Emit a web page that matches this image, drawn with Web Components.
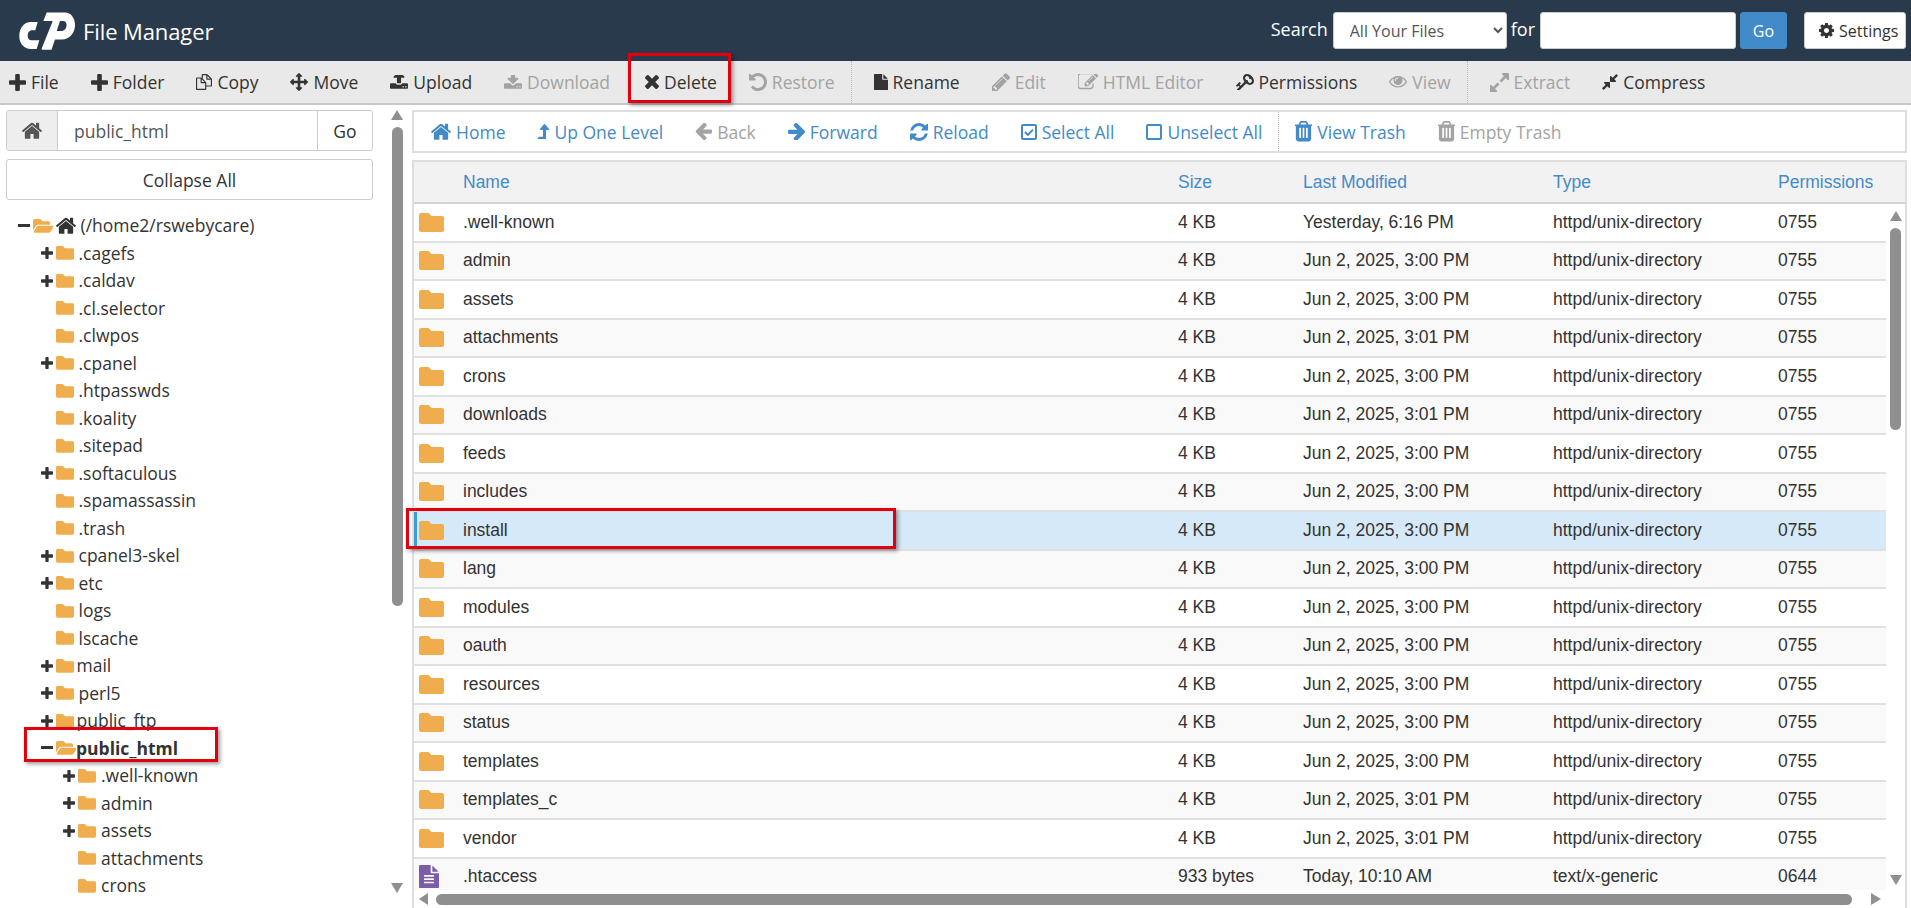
<!DOCTYPE html>
<html lang="en">
<head>
<meta charset="utf-8">
<title>File Manager</title>
<style>
html, body { margin: 0; padding: 0; background: #fff; overflow: hidden; }
body { width: 1911px; height: 908px; font-family: "Open Sans", "Liberation Sans", sans-serif; color: #333; }
</style>
</head>
<body>
<fm-page>
    <fm-header></fm-header>

    <fm-toolbar>
        <fm-action icon="plus" w="17" label="File" style="--pad-l:9px"></fm-action>
        <fm-action icon="plus" w="17" label="Folder"></fm-action>
        <fm-action icon="copy" w="16" label="Copy"></fm-action>
        <fm-action icon="move" w="18" label="Move"></fm-action>
        <fm-action icon="upload" w="18" label="Upload"></fm-action>
        <fm-action icon="download" w="18" label="Download" disabled></fm-action>
        <fm-action icon="times" w="14" label="Delete" style="--pad-l:19px"></fm-action>
        <fm-action icon="undo" w="18" label="Restore" disabled></fm-action>
        <fm-sep style="--after:6px"></fm-sep>
        <fm-action icon="file" w="14" label="Rename"></fm-action>
        <fm-action icon="pencil" w="18" label="Edit" disabled></fm-action>
        <fm-action icon="edit" w="20" label="HTML Editor" disabled></fm-action>
        <fm-action icon="key" w="18" label="Permissions"></fm-action>
        <fm-action icon="eye" w="18" label="View" disabled></fm-action>
        <fm-sep style="--after:6px"></fm-sep>
        <fm-action icon="expand" w="19" label="Extract" disabled></fm-action>
        <fm-action icon="compress" w="16" label="Compress"></fm-action>
    </fm-toolbar>

    <fm-workspace>
        <fm-sidebar slot="left">
            <fm-tree-row toggle="minus" open root>(/home2/rswebycare)</fm-tree-row>
            <fm-tree-row level="1" toggle="plus">.cagefs</fm-tree-row>
            <fm-tree-row level="1" toggle="plus">.caldav</fm-tree-row>
            <fm-tree-row level="1">.cl.selector</fm-tree-row>
            <fm-tree-row level="1">.clwpos</fm-tree-row>
            <fm-tree-row level="1" toggle="plus">.cpanel</fm-tree-row>
            <fm-tree-row level="1">.htpasswds</fm-tree-row>
            <fm-tree-row level="1">.koality</fm-tree-row>
            <fm-tree-row level="1">.sitepad</fm-tree-row>
            <fm-tree-row level="1" toggle="plus">.softaculous</fm-tree-row>
            <fm-tree-row level="1">.spamassassin</fm-tree-row>
            <fm-tree-row level="1">.trash</fm-tree-row>
            <fm-tree-row level="1" toggle="plus">cpanel3-skel</fm-tree-row>
            <fm-tree-row level="1" toggle="plus">etc</fm-tree-row>
            <fm-tree-row level="1">logs</fm-tree-row>
            <fm-tree-row level="1">lscache</fm-tree-row>
            <fm-tree-row level="1" toggle="plus" style="--gap:3px">mail</fm-tree-row>
            <fm-tree-row level="1" toggle="plus">perl5</fm-tree-row>
            <fm-tree-row level="1" toggle="plus" style="--gap:3px">public_ftp</fm-tree-row>
            <fm-tree-row level="1" toggle="minus" open current>public_html</fm-tree-row>
            <fm-tree-row level="2" toggle="plus">.well-known</fm-tree-row>
            <fm-tree-row level="2" toggle="plus">admin</fm-tree-row>
            <fm-tree-row level="2" toggle="plus">assets</fm-tree-row>
            <fm-tree-row level="2">attachments</fm-tree-row>
            <fm-tree-row level="2">crons</fm-tree-row>
        </fm-sidebar>

        <fm-scrollbar slot="rail" thumb="479" style="--track-top:0px;--thumb-gap:7px;--track-bottom:15px"></fm-scrollbar>

        <fm-nav slot="right">
            <fm-action icon="home" w="20" label="Home" tone="link" style="--gap:5px;--pad-l:17px"></fm-action>
            <fm-action icon="levelup" w="12" label="Up One Level" tone="link"></fm-action>
            <fm-action icon="left" w="17" label="Back" disabled></fm-action>
            <fm-action icon="right" w="17" label="Forward" tone="link"></fm-action>
            <fm-action icon="refresh" w="18" label="Reload" tone="link"></fm-action>
            <fm-action icon="checkbox" w="16" label="Select All" tone="link"></fm-action>
            <fm-action icon="box" w="16" label="Unselect All" tone="link"></fm-action>
            <fm-sep></fm-sep>
            <fm-action icon="trash" w="17" label="View Trash" tone="link"></fm-action>
            <fm-action icon="trash" w="17" label="Empty Trash" disabled></fm-action>
        </fm-nav>

        <fm-file-table slot="right">
            <fm-file-row name=".well-known" size="4 KB" modified="Yesterday, 6:16 PM" type="httpd/unix-directory" perms="0755"></fm-file-row>
            <fm-file-row name="admin" size="4 KB" modified="Jun 2, 2025, 3:00 PM" type="httpd/unix-directory" perms="0755"></fm-file-row>
            <fm-file-row name="assets" size="4 KB" modified="Jun 2, 2025, 3:00 PM" type="httpd/unix-directory" perms="0755"></fm-file-row>
            <fm-file-row name="attachments" size="4 KB" modified="Jun 2, 2025, 3:01 PM" type="httpd/unix-directory" perms="0755"></fm-file-row>
            <fm-file-row name="crons" size="4 KB" modified="Jun 2, 2025, 3:00 PM" type="httpd/unix-directory" perms="0755"></fm-file-row>
            <fm-file-row name="downloads" size="4 KB" modified="Jun 2, 2025, 3:01 PM" type="httpd/unix-directory" perms="0755"></fm-file-row>
            <fm-file-row name="feeds" size="4 KB" modified="Jun 2, 2025, 3:00 PM" type="httpd/unix-directory" perms="0755"></fm-file-row>
            <fm-file-row name="includes" size="4 KB" modified="Jun 2, 2025, 3:00 PM" type="httpd/unix-directory" perms="0755"></fm-file-row>
            <fm-file-row name="install" size="4 KB" modified="Jun 2, 2025, 3:00 PM" type="httpd/unix-directory" perms="0755" selected></fm-file-row>
            <fm-file-row name="lang" size="4 KB" modified="Jun 2, 2025, 3:00 PM" type="httpd/unix-directory" perms="0755"></fm-file-row>
            <fm-file-row name="modules" size="4 KB" modified="Jun 2, 2025, 3:00 PM" type="httpd/unix-directory" perms="0755"></fm-file-row>
            <fm-file-row name="oauth" size="4 KB" modified="Jun 2, 2025, 3:00 PM" type="httpd/unix-directory" perms="0755"></fm-file-row>
            <fm-file-row name="resources" size="4 KB" modified="Jun 2, 2025, 3:00 PM" type="httpd/unix-directory" perms="0755"></fm-file-row>
            <fm-file-row name="status" size="4 KB" modified="Jun 2, 2025, 3:00 PM" type="httpd/unix-directory" perms="0755"></fm-file-row>
            <fm-file-row name="templates" size="4 KB" modified="Jun 2, 2025, 3:00 PM" type="httpd/unix-directory" perms="0755"></fm-file-row>
            <fm-file-row name="templates_c" size="4 KB" modified="Jun 2, 2025, 3:01 PM" type="httpd/unix-directory" perms="0755"></fm-file-row>
            <fm-file-row name="vendor" size="4 KB" modified="Jun 2, 2025, 3:01 PM" type="httpd/unix-directory" perms="0755"></fm-file-row>
            <fm-file-row name=".htaccess" size="933 bytes" modified="Today, 10:10 AM" type="text/x-generic" perms="0644" kind="file"></fm-file-row>
        </fm-file-table>
    </fm-workspace>

    <!-- red annotation boxes drawn on top of the screenshot -->
    <fm-callout style="left:628px;top:53px;width:103px;height:50px"></fm-callout>
    <fm-callout style="left:406px;top:508px;width:490px;height:41px"></fm-callout>
    <fm-callout style="left:24px;top:727px;width:194px;height:35px"></fm-callout>
</fm-page>

<script>
// font awesome 4 style glyphs, [viewBox, path]
const GLYPHS = {
    plus: ['192 128 1408 1408', 'M1600 736v192q0 40-28 68t-68 28h-416v416q0 40-28 68t-68 28h-192q-40 0-68-28t-28-68v-416h-416q-40 0-68-28t-28-68v-192q0-40 28-68t68-28h416v-416q0-40 28-68t68-28h192q40 0 68 28t28 68v416h416q40 0 68 28t28 68z'],
    copy: ['0 0 1792 1792', 'M1696 384q40 0 68 28t28 68v1216q0 40-28 68t-68 28h-960q-40 0-68-28t-28-68v-288h-544q-40 0-68-28t-28-68v-672q0-40 20-88t48-76l408-408q28-28 76-48t88-20h416q40 0 68 28t28 68v328q68-40 128-40h416zm-544 213l-299 299h299v-299zm-640-384l-299 299h299v-299zm196 647l316-316v-416h-384v416q0 40-28 68t-68 28h-416v640h512v-256q0-40 20-88t48-76zm956 804v-1152h-384v416q0 40-28 68t-68 28h-416v640h896z', true],
    move: ['0 0 1792 1792', 'M1792 896q0 26-19 45l-256 256q-19 19-45 19t-45-19-19-45v-128h-384v384h128q26 0 45 19t19 45-19 45l-256 256q-19 19-45 19t-45-19l-256-256q-19-19-19-45t19-45 45-19h128v-384h-384v128q0 26-19 45t-45 19-45-19l-256-256q-19-19-19-45t19-45l256-256q19-19 45-19t45 19 19 45v128h384v-384h-128q-26 0-45-19t-19-45 19-45l256-256q19-19 45-19t45 19l256 256q19 19 19 45t-19 45-45 19h-128v384h384v-128q0-26 19-45t45-19 45 19l256 256q19 19 19 45z'],
    upload: ['64 256 1664 1280', 'M1344 1344q0-26-19-45t-45-19-45 19-19 45 19 45 45 19 45-19 19-45zm256 0q0-26-19-45t-45-19-45 19-19 45 19 45 45 19 45-19 19-45zm128-224v320q0 40-28 68t-68 28h-1472q-40 0-68-28t-28-68v-320q0-40 28-68t68-28h427q21 56 70.500 92t110.500 36h256q61 0 110.500-36t70.500-92h427q40 0 68 28t28 68zm-325-648q-17 40-59 40h-256v448q0 26-19 45t-45 19h-256q-26 0-45-19t-19-45v-448h-256q-42 0-59-40-17-39 14-69l448-448q18-19 45-19t45 19l448 448q31 30 14 69z'],
    download: ['64 256 1664 1280', 'M1344 1344q0-26-19-45t-45-19-45 19-19 45 19 45 45 19 45-19 19-45zm256 0q0-26-19-45t-45-19-45 19-19 45 19 45 45 19 45-19 19-45zm128-224v320q0 40-28 68t-68 28h-1472q-40 0-68-28t-28-68v-320q0-40 28-68t68-28h465l135 136q58 56 136 56t136-56l136-136h464q40 0 68 28t28 68zm-325-569q17 41-14 70l-448 448q-18 19-45 19t-45-19l-448-448q-31-29-14-70 17-39 59-39h256v-448q0-26 19-45t45-19h256q26 0 45 19t19 45v448h256q42 0 59 39z'],
    times: ['302 366 1188 1188', 'M1490 1322q0 40-28 68l-136 136q-28 28-68 28t-68-28l-294-294-294 294q-28 28-68 28t-68-28l-136-136q-28-28-28-68t28-68l294-294-294-294q-28-28-28-68t28-68l136-136q28-28 68-28t68 28l294 294 294-294q28-28 68-28t68 28l136 136q28 28 28 68t-28 68l-294 294 294 294q28 28 28 68z'],
    undo: ['128 128 1536 1536', 'M1664 896q0 156-61 298t-164 245-245 164-298 61q-172 0-327-72.500t-264-204.500q-7-10-6.500-22.500t8.500-20.500l137-138q10-9 25-9 16 2 23 12 73 95 179 147t225 52q104 0 198.500-40.500t163.500-109.500 109.500-163.500 40.500-198.500-40.500-198.500-109.500-163.500-163.500-109.500-198.500-40.500q-98 0-188 35.500t-160 101.500l137 138q31 30 14 69-17 40-59 40h-448q-26 0-45-19t-19-45v-448q0-42 40-59 39-17 69 14l130 129q107-101 244.500-156.500t284.500-55.500q156 0 298 61t245 164 164 245 61 298z'],
    file: ['128 0 1536 1792', 'M1152 512v-472q22 14 36 28l408 408q14 14 28 36h-472zm-128 32q0 40 28 68t68 28h544v1056q0 40-28 68t-68 28h-1344q-40 0-68-28t-28-68v-1600q0-40 28-68t68-28h800v544z'],
    filetext: ['128 0 1536 1792', 'M1596 476q14 14 28 36h-472v-472q22 14 36 28zm-476 164h544v1056q0 40-28 68t-68 28h-1344q-40 0-68-28t-28-68v-1600q0-40 28-68t68-28h800v544q0 40 28 68t68 28zm160 736v-64q0-14-9-23t-23-9h-704q-14 0-23 9t-9 23v64q0 14 9 23t23 9h704q14 0 23-9t9-23zm0-256v-64q0-14-9-23t-23-9h-704q-14 0-23 9t-9 23v64q0 14 9 23t23 9h704q14 0 23-9t9-23zm0-256v-64q0-14-9-23t-23-9h-704q-14 0-23 9t-9 23v64q0 14 9 23t23 9h704q14 0 23-9t9-23z'],
    pencil: ['128 128 1516 1536', 'M491 1536l91-91-235-235-91 91v107h128v128h107zm523-928q0-22-22-22-10 0-17 7l-542 542q-7 7-7 17 0 22 22 22 10 0 17-7l542-542q7-7 7-17zm-54-192l416 416-832 832h-416v-416zm683 96q0 53-37 90l-166 166-416-416 166-165q36-38 90-38 53 0 91 38l235 234q37 39 37 91z'],
    edit: ['64 224 1708 1440', 'M888 1184l116-116-152-152-116 116v56h96v96h56zm440-720q-16-16-33 1l-350 350q-17 17-1 33t33-1l350-350q17-17 1-33zm80 594v190q0 119-84.500 203.500t-203.500 84.500h-832q-119 0-203.500-84.500t-84.500-203.500v-832q0-119 84.500-203.500t203.500-84.500h832q63 0 117 25 15 7 18 23 3 17-9 29l-49 49q-14 14-32 8-23-6-45-6h-832q-66 0-113 47t-47 113v832q0 66 47 113t113 47h832q66 0 113-47t47-113v-126q0-13 9-22l64-64q15-15 35-7t20 29zm-96-738l288 288-672 672h-288v-288zm444 132l-92 92-288-288 92-92q28-28 68-28t68 28l152 152q28 28 28 68t-28 68z'],
    key: ['0 128 1683 1536', 'M832 512q0-80-56-136t-136-56-136 56-56 136q0 42 19 83-41-19-83-19-80 0-136 56t-56 136 56 136 136 56 136-56 56-136q0-42-19-83 41 19 83 19 80 0 136-56t56-136zm851 704q0 17-49 66t-66 49q-9 0-28.500-16t-36.500-33-38.500-40-24.500-26l-96 96 220 220q28 28 28 68 0 42-39 81t-81 39q-40 0-68-28l-671-671q-176 131-365 131-163 0-265.500-102.500t-102.500-265.500q0-160 95-313t248-248 313-95q163 0 265.500 102.500t102.500 265.500q0 189-131 365l355 355 96-96q-2-2-26-24.500t-40-38.500-33-36.500-16-28.500q0-17 49-66t66-49q13 0 23 10 6 6 46 44.500t82 79.500 86.500 86 73 78 28.500 41z', true],
    eye: ['0 384 1792 1152', 'M1664 960q-152-236-381-353 61 104 61 225 0 185-131.500 316.500t-316.500 131.500-316.500-131.500-131.500-316.500q0-121 61-225-229 117-381 353 133 205 333.500 326.500t434.500 121.500 434.500-121.500 333.500-326.500zm-720-384q0-20-14-34t-34-14q-125 0-214.500 89.500t-89.500 214.500q0 20 14 34t34 14 34-14 14-34q0-86 61-147t147-61q20 0 34-14t14-34zm848 384q0 34-20 69-140 230-376.500 368.500t-499.500 138.500-499.500-139-376.500-368q-20-35-20-69t20-69q140-229 376.500-368t499.500-139 499.500 139 376.500 368q20 35 20 69z'],
    expand: ['128 128 1536 1536', 'M883 1056q0 13-10 23l-332 332 144 144q19 19 19 45t-19 45-45 19h-448q-26 0-45-19t-19-45v-448q0-26 19-45t45-19 45 19l144 144 332-332q10-10 23-10t23 10l114 114q10 10 10 23zm781-864v448q0 26-19 45t-45 19-45-19l-144-144-332 332q-10 10-23 10t-23-10l-114-114q-10-10-10-23t10-23l332-332-144-144q-19-19-19-45t19-45 45-19h448q26 0 45 19t19 45z'],
    compress: ['128 128 1536 1536', 'M896 960v448q0 26-19 45t-45 19-45-19l-144-144-332 332q-10 10-23 10t-23-10l-114-114q-10-10-10-23t10-23l332-332-144-144q-19-19-19-45t19-45 45-19h448q26 0 45 19t19 45zm755-672q0 13-10 23l-332 332 144 144q19 19 19 45t-19 45-45 19h-448q-26 0-45-19t-19-45v-448q0-26 19-45t45-19 45 19l144 144 332-332q10-10 23-10t23 10l114 114q10 10 10 23z'],
    home: ['90 192 1612 1344', 'M1472 992v480q0 26-19 45t-45 19h-384v-384h-256v384h-384q-26 0-45-19t-19-45v-480q0-1 .5-3t.5-3l575-474 575 474q1 2 1 6zm223-69l-62 74q-8 9-21 11h-3q-13 0-21-7l-692-577-692 577q-12 8-24 7-13-2-21-11l-62-74q-8-10-7-23.500t11-21.500l719-599q32-26 76-26t76 26l244 204v-195q0-14 9-23t23-9h192q14 0 23 9t9 23v408l219 182q10 8 11 21.500t-7 23.500z'],
    levelup: ['384 77 1024 1343', 'M1402 548q-18 40-58 40h-192v800q0 14-9 23t-23 9h-704q-21 0-29-18-8-20 4-35l160-192q9-11 25-11h320v-576h-192q-40 0-58-37-17-37 9-68l320-384q18-22 49-22t49 22l320 384q27 32 9 65z'],
    left: ['128 192 1536 1536', 'M1664 896v128q0 53-32.500 90.500t-84.500 37.500h-704l293 294q38 36 38 90t-38 90l-75 76q-37 37-90 37-52 0-91-37l-651-652q-37-37-37-90 0-52 37-91l651-650q38-38 91-38 52 0 90 38l75 74q38 38 38 91t-38 91l-293 293h704q52 0 84.500 37.500t32.500 90.500z'],
    right: ['128 192 1472 1536', 'M1600 960q0 54-37 91l-651 651q-39 37-91 37-51 0-90-37l-75-75q-38-38-38-91t38-91l293-293h-704q-52 0-84.500-37.500t-32.500-90.500v-128q0-53 32.500-90.500t84.500-37.500h704l-293-294q-38-36-38-90t38-90l75-75q38-38 90-38 53 0 91 38l651 651q37 35 37 90z'],
    refresh: ['128 128 1536 1536', 'M1639 1056q0 5-1 7-64 268-268 434.500t-478 166.500q-146 0-282.500-55t-243.500-157l-129 129q-19 19-45 19t-45-19-19-45v-448q0-26 19-45t45-19h448q26 0 45 19t19 45-19 45l-137 137q71 66 161 102t187 36q134 0 250-65t186-179q11-17 53-117 8-23 30-23h192q13 0 22.500 9.500t9.500 22.500zm25-800v448q0 26-19 45t-45 19h-448q-26 0-45-19t-19-45 19-45l138-138q-148-137-349-137-134 0-250 65t-186 179q-11 17-53 117-8 23-30 23h-199q-13 0-22.500-9.500t-9.500-22.500v-7q65-268 270-434.500t480-166.500q146 0 284 55.500t245 156.500l130-129q19-19 45-19t45 19 19 45z'],
    checkbox: ['0 0 16 16', 'M2 0h12a2 2 0 0 1 2 2v12a2 2 0 0 1-2 2H2a2 2 0 0 1-2-2V2a2 2 0 0 1 2-2zM2 2v12h12V2zM6.800 12.200 3.300 8.700l1.400-1.400 2.100 2.100 4.500-4.500 1.400 1.400z'],
    box: ['0 0 16 16', 'M2 0h12a2 2 0 0 1 2 2v12a2 2 0 0 1-2 2H2a2 2 0 0 1-2-2V2a2 2 0 0 1 2-2zM2 2v12h12V2z'],
    trash: ['256 128 1280 1536', 'M704 1376v-704q0-14-9-23t-23-9h-64q-14 0-23 9t-9 23v704q0 14 9 23t23 9h64q14 0 23-9t9-23zm256 0v-704q0-14-9-23t-23-9h-64q-14 0-23 9t-9 23v704q0 14 9 23t23 9h64q14 0 23-9t9-23zm256 0v-704q0-14-9-23t-23-9h-64q-14 0-23 9t-9 23v704q0 14 9 23t23 9h64q14 0 23-9t9-23zm-544-992h448l-48-117q-7-9-17-11h-317q-10 2-17 11zm928 32v64q0 14-9 23t-23 9h-96v948q0 83-47 143.500t-113 60.500h-832q-66 0-113-58.500t-47-141.500v-952h-96q-14 0-23-9t-9-23v-64q0-14 9-23t23-9h309l70-167q15-37 54-63t79-26h320q40 0 79 26t54 63l70 167h309q14 0 23 9t9 23z'],
    cog: ['128 128 1536 1536', 'M1152 896q0-106-75-181t-181-75-181 75-75 181 75 181 181 75 181-75 75-181zm512-109v222q0 12-8 23t-20 13l-185 28q-19 54-39 91 35 50 107 138 10 12 10 25t-9 23q-27 37-99 108t-94 71q-12 0-26-9l-138-108q-44 23-91 38-16 136-29 186-7 28-36 28h-222q-14 0-24.500-8.500t-11.500-21.500l-28-184q-49-16-90-37l-141 107q-10 9-25 9-14 0-25-11-126-114-165-168-7-10-7-23 0-12 8-23 15-21 51-66.500t54-70.500q-27-50-41-99l-183-27q-13-2-21-12.500t-8-23.500v-222q0-12 8-23t19-13l186-28q14-46 39-92-40-57-107-138-10-12-10-24 0-10 9-23 26-36 98.500-107.500t94.500-71.500q13 0 26 10l138 107q44-23 91-38 16-136 29-186 7-28 36-28h222q14 0 24.500 8.500t11.500 21.500l28 184q49 16 90 37l142-107q9-9 24-9 13 0 25 10 129 119 165 170 7 8 7 22 0 12-8 23-15 21-51 66.500t-54 70.500q26 50 41 98l183 28q13 2 21 12.500t8 23.500z'],
    folder: ['0 0 25 19', 'M2 0h7.500l3 3H23a2 2 0 0 1 2 2v12a2 2 0 0 1-2 2H2a2 2 0 0 1-2-2V2a2 2 0 0 1 2-2z'],
    folderopen: ['0 64 576 384', 'M572.694 292.093L500.27 416.248A63.997 63.997 0 0 1 444.989 448H45.025c-18.523 0-30.064-20.093-20.731-36.093l72.424-124.155A64 64 0 0 1 152 256h399.964c18.523 0 30.064 20.093 20.73 36.093zM152 224h328v-48c0-26.51-21.49-48-48-48H272l-64-64H48C21.49 64 0 85.49 0 112v278.046l69.077-118.418C86.214 242.25 117.989 224 152 224z']
};

class FmIcon extends HTMLElement {
    constructor() {
        super();
        this.attachShadow({ mode: 'open' });
    }

    connectedCallback() {
        const [box, d, flip] = GLYPHS[this.getAttribute('name')];
        const [, , bw, bh] = box.split(' ').map(Number);
        const w = Number(this.getAttribute('w')) || 16;
        this.shadowRoot.innerHTML = `
        <style>
        :host { display: inline-flex; flex: none; line-height: 0; }
        svg { display: block; fill: currentColor; ${flip ? 'transform: scaleX(-1);' : ''} }
        </style>
        <svg viewBox="${box}" width="${w}" height="${(w * bh / bw).toFixed(2)}"><path fill-rule="evenodd" d="${d}"/></svg>
        `;
    }
}

class FmPage extends HTMLElement {
    constructor() {
        super();
        this.attachShadow({ mode: 'open' });
        this.shadowRoot.innerHTML = `
        <style>
        :host {
            display: flex;
            flex-direction: column;
            position: relative;
            width: 1911px;
            height: 908px;
            overflow: hidden;
        }
        </style>
        <slot></slot>
        `;
    }
}

class FmHeader extends HTMLElement {
    constructor() {
        super();
        this.attachShadow({ mode: 'open' });
        this.shadowRoot.innerHTML = `
        <style>
        :host {
            display: flex;
            align-items: center;
            flex: none;
            height: 61px;
            padding: 0 5px 0 18px;
            box-sizing: border-box;
            background: #2a3a4d;
            color: #fff;
            font-family: "Open Sans", sans-serif;
        }
        .logo { display: block; margin-top: 1px; }
        h1 { margin: 0 0 0 7px; font-size: 22px; font-weight: 400; line-height: 1; letter-spacing: -.1px; }
        .search { display: flex; align-items: center; margin-left: auto; height: 37px; }
        label { font-size: 18px; line-height: 1; padding-bottom: 4px; }
        select, input, button {
            box-sizing: border-box;
            height: 37px;
            border: 1px solid #ccc;
            border-radius: 3px;
            background: #fff;
            font: 16px "Open Sans", sans-serif;
            color: #555;
        }
        select { width: 174px; margin: 0 4px 0 5px; padding: 0 12px; }
        input { width: 196px; margin: 0 4px 0 5px; }
        .go { width: 47px; background: #428bca; border-color: #428bca; color: #fff; padding: 0; }
        .settings {
            display: flex;
            align-items: center;
            gap: 5px;
            width: 102px;
            margin-left: 17px;
            padding: 0 0 0 14px;
            color: #333;
        }
        </style>
        <svg class="logo" viewBox="18 10 58 40" width="58" height="40" fill="#fff" fill-rule="evenodd">
            <path d="M37.700 21H31C24 21 19.300 27 19.300 35C19.300 42.500 24 48 31 48H36.700L39.300 39.300H31.500C29 39.300 27.700 37.500 27.700 35C27.700 31.500 29.500 29.300 32 29.300H35.300Z"/>
            <path d="M46.700 11.500H65C71 11.500 75 17 75 24C75 32 69.500 38.500 62 38.500H55L51.500 48.700H42.300C41.600 48.700 41.500 48 41.800 47.300L52.700 20H43.300ZM60 20 56.700 30H61C64.500 30 66.500 27.500 66.500 24C66.500 21.500 65.300 20 63 20Z"/>
        </svg>
        <h1>File Manager</h1>
        <div class="search">
            <label>Search</label>
            <select><option>All Your Files</option></select>
            <label>for</label>
            <input type="text">
            <button class="go">Go</button>
            <button class="settings"><fm-icon name="cog" w="15"></fm-icon>Settings</button>
        </div>
        `;
    }
}

class FmToolbar extends HTMLElement {
    constructor() {
        super();
        this.attachShadow({ mode: 'open' });
        this.shadowRoot.innerHTML = `
        <style>
        :host {
            display: flex;
            align-items: stretch;
            flex: none;
            height: 44px;
            box-sizing: border-box;
            background: #e9e9e9;
            border-bottom: 2px solid #c6c8cc;
        }
        </style>
        <slot></slot>
        `;
    }
}

class FmAction extends HTMLElement {
    constructor() {
        super();
        this.attachShadow({ mode: 'open' });
    }

    connectedCallback() {
        const icon = this.getAttribute('icon');
        const w = this.getAttribute('w');
        const label = this.getAttribute('label');
        this.shadowRoot.innerHTML = `
        <style>
        :host {
            display: flex;
            align-items: center;
            gap: var(--gap, 5px);
            padding: 0 16px 0 var(--pad-l, 16px);
            font: 17.5px "Open Sans", sans-serif;
            color: #333;
            white-space: nowrap;
            cursor: pointer;
        }
        :host([tone="link"]) { color: #428bca; }
        :host([disabled]) { color: #a3a3a3; cursor: default; }
        </style>
        <fm-icon name="${icon}" w="${w}"></fm-icon><span>${label}</span>
        `;
    }
}

class FmSep extends HTMLElement {
    constructor() {
        super();
        this.attachShadow({ mode: 'open' });
        this.shadowRoot.innerHTML = `
        <style>
        :host {
            display: block;
            flex: none;
            width: 0;
            border-left: 1px dotted #bbb;
            margin-right: var(--after, 0);
        }
        </style>
        `;
    }
}

class FmWorkspace extends HTMLElement {
    constructor() {
        super();
        this.attachShadow({ mode: 'open' });
        this.shadowRoot.innerHTML = `
        <style>
        :host {
            display: flex;
            flex: 1;
            min-height: 0;
            padding: 5px 4px 0 6px;
        }
        .left { flex: none; width: 367px; }
        .rail { flex: none; width: 18px; margin: 0 6px 0 15px; }
        .right { flex: 1; min-width: 0; display: flex; flex-direction: column; gap: 7px; }
        </style>
        <div class="left"><slot name="left"></slot></div>
        <div class="rail"><slot name="rail"></slot></div>
        <div class="right"><slot name="right"></slot></div>
        `;
    }
}

class FmSidebar extends HTMLElement {
    constructor() {
        super();
        this.attachShadow({ mode: 'open' });
        this.shadowRoot.innerHTML = `
        <style>
        :host { display: block; font-family: "Open Sans", sans-serif; }
        .path {
            display: flex;
            height: 41px;
            box-sizing: border-box;
            border: 1px solid #ccc;
            border-radius: 3px;
            font-size: 17.5px;
            color: #555;
            overflow: hidden;
        }
        .addon {
            display: flex;
            align-items: center;
            justify-content: center;
            flex: none;
            width: 50px;
            background: #eee;
            border-right: 1px solid #ccc;
        }
        .path-text { flex: 1; display: flex; align-items: center; padding-left: 16px; }
        .go {
            flex: none;
            width: 54px;
            display: flex;
            align-items: center;
            justify-content: center;
            border-left: 1px solid #ccc;
            color: #333;
        }
        .collapse {
            margin-top: 8px;
            height: 41px;
            box-sizing: border-box;
            border: 1px solid #ccc;
            border-radius: 3px;
            display: flex;
            align-items: center;
            justify-content: center;
            font-size: 17.5px;
            color: #333;
        }
        .tree { margin: 12px -6px 0; }
        </style>
        <div class="path">
            <div class="addon"><fm-icon name="home" w="20"></fm-icon></div>
            <div class="path-text">public_html</div>
            <div class="go">Go</div>
        </div>
        <div class="collapse">Collapse All</div>
        <div class="tree"><slot></slot></div>
        `;
    }
}

class FmTreeRow extends HTMLElement {
    constructor() {
        super();
        this.attachShadow({ mode: 'open' });
    }

    connectedCallback() {
        const level = Number(this.getAttribute('level')) || 0;
        const toggle = this.getAttribute('toggle');
        const open = this.hasAttribute('open');
        this.shadowRoot.innerHTML = `
        <style>
        :host {
            display: flex;
            align-items: center;
            height: 27.5px;
            padding-left: ${18 + level * 22.5}px;
            font-size: 17.5px;
            color: #333;
            white-space: nowrap;
        }
        :host([current]) { font-weight: 700; }
        .toggle { flex: none; width: 15px; display: flex; color: #333; }
        .minus { width: 12px; height: 3px; background: #333; margin-top: -1px; }
        .folder { color: #f0ad4e; display: flex; }
        .home { margin-left: 2px; color: #333; display: flex; }
        span.label { margin-left: var(--gap, ${open ? '0px' : '5px'}); line-height: 1; }
        :host([root]) span.label { margin-left: 5px; }
        </style>
        <div class="toggle">${toggle === 'plus' ? '<fm-icon name="plus" w="12"></fm-icon>' : toggle === 'minus' ? '<div class="minus"></div>' : ''}</div>
        <div class="folder"><fm-icon name="${open ? 'folderopen' : 'folder'}" w="${open ? 20.5 : 18}"></fm-icon></div>
        ${this.hasAttribute('root') ? '<div class="home"><fm-icon name="home" w="20"></fm-icon></div>' : ''}
        <span class="label"><slot></slot></span>
        `;
    }
}

class FmScrollbar extends HTMLElement {
    constructor() {
        super();
        this.attachShadow({ mode: 'open' });
    }

    connectedCallback() {
        const thumb = this.getAttribute('thumb');
        if (this.getAttribute('dir') === 'x') {
            this.shadowRoot.innerHTML = `
            <style>
            :host { display: flex; align-items: center; height: 18px; padding-left: 5px; background: #fff; }
            .a { width: 0; height: 0; border: 6px solid transparent; }
            .back { border-right: 9px solid #8f8f8f; border-left: 0; }
            .fwd { border-left: 10px solid #8f8f8f; border-right: 0; margin-left: 19px; }
            .thumb { width: ${thumb}px; height: 11px; margin-left: 8px; border-radius: 6px; background: #8f8f8f; }
            </style>
            <div class="a back"></div><div class="thumb"></div><div class="a fwd"></div>
            `;
            return;
        }
        this.shadowRoot.innerHTML = `
        <style>
        :host {
            display: flex;
            flex-direction: column;
            align-items: center;
            height: 100%;
            box-sizing: border-box;
            padding: var(--track-top, 0) 0 var(--track-bottom, 0);
        }
        .a { width: 0; height: 0; flex: none; border: 0 solid transparent; border-width: 0 6.500px; }
        .up { border-bottom: 10px solid #8f8f8f; }
        .down { border-top: 10px solid #8f8f8f; margin-top: auto; }
        .thumb { flex: none; width: 11px; height: ${thumb}px; margin-top: var(--thumb-gap, 7px); border-radius: 6px; background: #8f8f8f; }
        </style>
        <div class="a up"></div><div class="thumb"></div><div class="a down"></div>
        `;
    }
}

class FmNav extends HTMLElement {
    constructor() {
        super();
        this.attachShadow({ mode: 'open' });
        this.shadowRoot.innerHTML = `
        <style>
        :host {
            display: flex;
            align-items: stretch;
            flex: none;
            height: 43px;
            box-sizing: border-box;
            border: 2px solid #dedede;
            background: #fff;
        }
        </style>
        <slot></slot>
        `;
    }
}

const COLUMNS = '49px 715px 125px 250px 225px 1fr';

class FmFileTable extends HTMLElement {
    constructor() {
        super();
        this.attachShadow({ mode: 'open' });
        this.shadowRoot.innerHTML = `
        <style>
        :host {
            display: flex;
            flex-direction: column;
            flex: 1;
            min-height: 0;
            box-sizing: border-box;
            border: solid #dedede;
            border-width: 2px 2px 0;
            font: 17.5px "Liberation Sans", Arial, sans-serif;
            color: #333;
        }
        .head {
            display: grid;
            grid-template-columns: ${COLUMNS};
            align-items: center;
            flex: none;
            height: 42px;
            box-sizing: border-box;
            background: #f2f2f2;
            border-bottom: 2px solid #d3d3d3;
            color: #428bca;
        }
        .head span:first-child { grid-column: 2; }
        .body { display: flex; flex: 1; min-height: 0; }
        .rows { width: 1472px; flex: none; overflow: hidden; }
        .side { flex: 1; --track-top: 7px; --track-bottom: 5px; }
        </style>
        <div class="head">
            <span>Name</span><span>Size</span><span>Last Modified</span><span>Type</span><span>Permissions</span>
        </div>
        <div class="body">
            <div class="rows"><slot></slot></div>
            <div class="side"><fm-scrollbar thumb="202"></fm-scrollbar></div>
        </div>
        <fm-scrollbar dir="x" thumb="1416"></fm-scrollbar>
        `;
    }
}

class FmFileRow extends HTMLElement {
    constructor() {
        super();
        this.attachShadow({ mode: 'open' });
    }

    connectedCallback() {
        const get = key => this.getAttribute(key);
        const isFile = get('kind') === 'file';
        this.shadowRoot.innerHTML = `
        <style>
        :host {
            display: grid;
            grid-template-columns: ${COLUMNS};
            align-items: center;
            height: 38.5px;
            box-sizing: border-box;
            border-bottom: 2px solid #e0e0e0;
            background: #fff;
            white-space: nowrap;
        }
        :host(:nth-of-type(even)) { background: #f9f9f9; }
        :host([selected]) { background: #d6e9f8; box-shadow: inset 3px 0 0 #3d9bd6; }
        .ico { padding-left: 5px; display: flex; color: ${isFile ? '#7b5ea7' : '#f0ad4e'}; }
        </style>
        <div class="ico"><fm-icon name="${isFile ? 'filetext' : 'folder'}" w="${isFile ? 20 : 25}"></fm-icon></div>
        <span>${get('name')}</span><span>${get('size')}</span><span>${get('modified')}</span><span>${get('type')}</span><span>${get('perms')}</span>
        `;
    }
}

class FmCallout extends HTMLElement {
    constructor() {
        super();
        this.attachShadow({ mode: 'open' });
        this.shadowRoot.innerHTML = `
        <style>
        :host {
            display: block;
            position: absolute;
            box-sizing: border-box;
            border: 3px solid #e2000f;
            box-shadow: 2px 2px 4px rgba(0, 0, 0, .4);
            pointer-events: none;
        }
        </style>
        `;
    }
}

customElements.define('fm-icon', FmIcon);
customElements.define('fm-page', FmPage);
customElements.define('fm-header', FmHeader);
customElements.define('fm-toolbar', FmToolbar);
customElements.define('fm-action', FmAction);
customElements.define('fm-sep', FmSep);
customElements.define('fm-workspace', FmWorkspace);
customElements.define('fm-sidebar', FmSidebar);
customElements.define('fm-tree-row', FmTreeRow);
customElements.define('fm-scrollbar', FmScrollbar);
customElements.define('fm-nav', FmNav);
customElements.define('fm-file-table', FmFileTable);
customElements.define('fm-file-row', FmFileRow);
customElements.define('fm-callout', FmCallout);
</script>
</body>
</html>
